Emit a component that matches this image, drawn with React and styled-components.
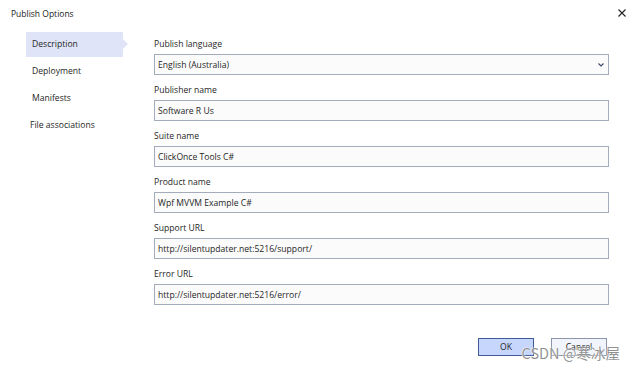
import React from "react";
import styled, { createGlobalStyle } from "styled-components";

const GlobalStyle = createGlobalStyle`
  html, body {
    margin: 0;
    padding: 0;
    background: #ffffff;
  }
  body {
    font-family: "Open Sans", "Noto Sans", sans-serif;
    color: #1f1f1f;
  }
`;

const fields = [
  { label: "Publish language", value: "English (Australia)", combo: true },
  { label: "Publisher name", value: "Software R Us" },
  { label: "Suite name", value: "ClickOnce Tools C#" },
  { label: "Product name", value: "Wpf MVVM Example C#" },
  { label: "Support URL", value: "http://silentupdater.net:5216/support/" },
  { label: "Error URL", value: "http://silentupdater.net:5216/error/" },
];

const navItems = ["Description", "Deployment", "Manifests", "File associations"];

export default function App() {
  return (
    <Window>
      <GlobalStyle />
      <TitleBar>
        <Title>Publish Options</Title>
        <Close aria-label="close">
          <svg width="8" height="8" viewBox="0 0 8 8">
            <path d="M0.5 0.5 L7.5 7.5 M7.5 0.5 L0.5 7.5" stroke="#222" strokeWidth="1.1" />
          </svg>
        </Close>
      </TitleBar>
      <Body>
        <Nav>
          {navItems.map((item, i) => (
            <NavItem key={item} $active={i === 0} $indent={i === 3 ? 4 : 6}>
              {item}
            </NavItem>
          ))}
        </Nav>
        <Form>
          {fields.map((f) => (
            <Field key={f.label}>
              <Label>{f.label}</Label>
              <Input>
                <span>{f.value}</span>
                {f.combo && (
                  <svg width="6" height="4" viewBox="0 0 6 4">
                    <path d="M0.5 0.5 L3 3 L5.5 0.5" fill="none" stroke="#3a4a66" strokeWidth="1.1" />
                  </svg>
                )}
              </Input>
            </Field>
          ))}
        </Form>
      </Body>
      <Footer>
        <Button $primary>OK</Button>
        <Button>Cancel</Button>
        <Watermark>CSDN @寒冰屋</Watermark>
      </Footer>
    </Window>
  );
}

const Window = styled.div`
  position: relative;
  width: 636px;
  height: 370px;
  display: flex;
  flex-direction: column;
  font-size: 8.6px;
  overflow: hidden;
`;

const TitleBar = styled.div`
  display: flex;
  align-items: center;
  justify-content: space-between;
  height: 26px;
  padding: 0 9px 0 11px;
`;

const Title = styled.div`
  font-size: 8.5px;
  color: #1a1a1a;
`;

const Close = styled.div`
  display: flex;
  align-items: center;
  justify-content: center;
  width: 10px;
  height: 10px;
`;

const Body = styled.div`
  display: flex;
  padding-left: 26px;
  padding-top: 6px;
`;

const Nav = styled.div`
  width: 97px;
  display: flex;
  flex-direction: column;
  gap: 2px;
`;

const NavItem = styled.div`
  position: relative;
  height: 25px;
  line-height: 25px;
  padding-left: ${(p) => p.$indent}px;
  background: ${(p) => (p.$active ? "#dfe4f8" : "transparent")};
  color: #262626;

  ${(p) =>
    p.$active &&
    `
    &::after {
      content: "";
      position: absolute;
      right: -5px;
      top: 7px;
      border-top: 5px solid transparent;
      border-bottom: 5px solid transparent;
      border-left: 5px solid #dfe4f8;
    }
  `}
`;

const Form = styled.div`
  margin-left: 31px;
  width: 455px;
  display: flex;
  flex-direction: column;
  gap: 8px;
  padding-top: 5px;
`;

const Field = styled.div`
  display: flex;
  flex-direction: column;
  gap: 2px;
`;

const Label = styled.div`
  line-height: 15px;
  color: #262626;
`;

const Input = styled.div`
  box-sizing: border-box;
  height: 21px;
  display: flex;
  align-items: center;
  justify-content: space-between;
  padding: 0 4px 0 3px;
  background: #fbfbfb;
  border: 1px solid #a4acbc;
  color: #1f1f1f;
`;

const Footer = styled.div`
  position: relative;
  display: flex;
  justify-content: flex-end;
  gap: 17px;
  margin-top: auto;
  padding: 0 29px 14px 0;
`;

const Button = styled.div`
  box-sizing: border-box;
  width: 56px;
  height: 18px;
  display: flex;
  align-items: center;
  justify-content: center;
  background: ${(p) => (p.$primary ? "#c6d6fc" : "#f1f4fb")};
  border: 1px solid ${(p) => (p.$primary ? "#3f5b98" : "#8c96aa")};
  color: #1f1f1f;
`;

const Watermark = styled.div`
  position: absolute;
  right: 16px;
  bottom: 7px;
  font-family: "Noto Sans CJK SC", "Noto Sans", sans-serif;
  font-size: 14.5px;
  color: rgba(115, 115, 115, 0.78);
  text-shadow: 0 0 1px #fff, 0 0 2px #fff;
  pointer-events: none;
`;
